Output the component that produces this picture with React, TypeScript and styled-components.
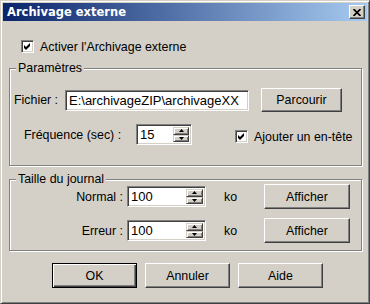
import React from 'react';
import styled, { createGlobalStyle } from 'styled-components';

const GlobalStyle = createGlobalStyle`
  html, body {
    margin: 0;
    padding: 0;
    background: #ffffff;
  }
  body {
    font-family: "Liberation Sans", Arial, sans-serif;
    font-size: 12.4px;
    color: #000;
  }
`;

const Window = styled.div`
  box-sizing: border-box;
  width: 370px;
  height: 304px;
  padding: 2px;
  background: #d4d0c8;
  border: 1px solid;
  border-color: #d4d0c8 #404040 #404040 #d4d0c8;
  box-shadow: inset 1px 1px #ffffff, inset -1px -1px #808080;
  display: flex;
  flex-direction: column;
`;

const TitleBar = styled.div`
  height: 18px;
  padding: 0 2px 0 4px;
  display: flex;
  align-items: center;
  justify-content: space-between;
  background: linear-gradient(to right, #0a246a, #a6caf0);
`;

const Title = styled.span`
  font-family: "DejaVu Sans", Tahoma, sans-serif;
  font-weight: bold;
  font-size: 11.5px;
  color: #ffffff;
`;

const CloseButton = styled.button`
  box-sizing: border-box;
  width: 16px;
  height: 14px;
  padding: 0;
  display: flex;
  align-items: center;
  justify-content: center;
  background: #d4d0c8;
  border: 1px solid;
  border-color: #ffffff #404040 #404040 #ffffff;
  box-shadow: inset -1px -1px #808080;
`;

const Content = styled.div`
  padding: 0 5px 0 6px;
  display: flex;
  flex-direction: column;
`;

const CheckRow = styled.label<{ $offset?: number }>`
  display: flex;
  align-items: center;
  gap: 6px;
  height: 13px;
  margin-top: ${(p) => p.$offset ?? 0}px;
`;

const TopCheck = styled(CheckRow)`
  margin: 19px 0 0 12px;
`;

const Box = styled.span`
  box-sizing: border-box;
  width: 13px;
  height: 13px;
  padding: 1px;
  display: inline-flex;
  align-items: center;
  justify-content: center;
  background: #ffffff;
  border: 1px solid;
  border-color: #808080 #ffffff #ffffff #808080;
  box-shadow: inset 1px 1px #404040, inset -1px -1px #d4d0c8;
`;

const Group = styled.div<{ $top: number; $pad: string }>`
  position: relative;
  margin-top: ${(p) => p.$top}px;
  padding: ${(p) => p.$pad};
  border: 1px solid #808080;
  box-shadow: inset 1px 1px #ffffff, 1px 1px #ffffff;
  display: flex;
  flex-direction: column;
`;

const Legend = styled.span`
  position: absolute;
  top: -8px;
  left: 6px;
  padding: 0 2px;
  line-height: 14px;
  background: #d4d0c8;
`;

const Row = styled.div<{ $gap?: number }>`
  display: flex;
  align-items: center;
  margin-top: ${(p) => p.$gap ?? 0}px;
`;

const Label = styled.span<{ $width: number; $indent?: number; $right?: boolean }>`
  width: ${(p) => p.$width}px;
  margin-left: ${(p) => p.$indent ?? 0}px;
  text-align: ${(p) => (p.$right ? 'right' : 'left')};
  flex-shrink: 0;
`;

const Sunken = styled.div<{ $width: number }>`
  box-sizing: border-box;
  width: ${(p) => p.$width}px;
  height: 21px;
  display: flex;
  background: #ffffff;
  border: 1px solid;
  border-color: #808080 #ffffff #ffffff #808080;
  box-shadow: inset 1px 1px #404040, inset -1px -1px #d4d0c8;
  padding: 2px;
  flex-shrink: 0;
`;

const FieldText = styled.span`
  flex: 1;
  overflow: hidden;
  white-space: nowrap;
  padding-left: 1px;
  font-size: 13px;
  line-height: 15px;
`;

const Spin = styled.div<{ $width: number }>`
  width: ${(p) => p.$width}px;
  display: flex;
  flex-direction: column;
`;

const SpinButton = styled.span`
  box-sizing: border-box;
  flex: 1;
  display: flex;
  align-items: center;
  justify-content: center;
  background: #d4d0c8;
  border: 1px solid;
  border-color: #d4d0c8 #404040 #404040 #d4d0c8;
  box-shadow: inset 1px 1px #ffffff, inset -1px -1px #808080;
`;

const Button = styled.button<{ $width: number; $height?: number; $default?: boolean }>`
  box-sizing: border-box;
  width: ${(p) => p.$width}px;
  height: ${(p) => p.$height ?? 25}px;
  padding: 0;
  flex-shrink: 0;
  font-family: "Liberation Sans", Arial, sans-serif;
  font-size: 12.4px;
  color: #000;
  background: #d4d0c8;
  border: 1px solid;
  border-color: ${(p) => (p.$default ? '#000000' : '#ffffff #404040 #404040 #ffffff')};
  box-shadow: ${(p) =>
    p.$default
      ? 'inset 1px 1px #ffffff, inset -1px -1px #404040, inset -2px -2px #808080'
      : 'inset -1px -1px #808080, inset 1px 1px #d4d0c8'};
`;

const Unit = styled.span`
  width: 40px;
  margin-left: 18px;
  flex-shrink: 0;
`;

const Actions = styled.div`
  display: flex;
  gap: 8px;
  margin: 12px 0 0 43px;
`;

const Check = () => (
  <svg width="9" height="9" viewBox="0 0 9 9">
    <polygon points="1,3 3,5 7,1 7,4 3,8 1,6" fill="#000" />
  </svg>
);

const Arrow = ({ up }: { up?: boolean }) => (
  <svg width="5" height="3" viewBox="0 0 5 3">
    <polygon points={up ? '0,3 5,3 2.5,0' : '0,0 5,0 2.5,3'} fill="#000" />
  </svg>
);

const SpinField = ({ value, width, spin }: { value: string; width: number; spin: number }) => (
  <Sunken $width={width}>
    <FieldText>{value}</FieldText>
    <Spin $width={spin}>
      <SpinButton>
        <Arrow up />
      </SpinButton>
      <SpinButton>
        <Arrow />
      </SpinButton>
    </Spin>
  </Sunken>
);

export default function App() {
  return (
    <>
      <GlobalStyle />
      <Window>
        <TitleBar>
          <Title>Archivage externe</Title>
          <CloseButton>
            <svg width="8" height="7" viewBox="0 0 8 7">
              <path d="M0.5 0 L7.5 7 M7.5 0 L0.5 7" stroke="#000" strokeWidth="1.7" />
            </svg>
          </CloseButton>
        </TitleBar>
        <Content>
          <TopCheck>
            <Box>
              <Check />
            </Box>
            Activer l'Archivage externe
          </TopCheck>

          <Group $top={15} $pad="19px 0 20px 4px">
            <Legend>Paramètres</Legend>
            <Row>
              <Label $width={51}>Fichier :</Label>
              <Sunken $width={184}>
                <FieldText>E:\archivageZIP\archivageXX</FieldText>
              </Sunken>
              <Button $width={81} $height={24} style={{ marginLeft: 12 }}>
                Parcourir
              </Button>
            </Row>
            <Row $gap={12}>
              <Label $width={112} $indent={10}>
                Fréquence (sec) :
              </Label>
              <SpinField value="15" width={56} spin={16} />
              <CheckRow $offset={4} style={{ marginLeft: 43 }}>
                <Box>
                  <Check />
                </Box>
                Ajouter un en-tête
              </CheckRow>
            </Row>
          </Group>

          <Group $top={13} $pad="4px 0 7px 0">
            <Legend>Taille du journal</Legend>
            <Row>
              <Label $width={113} $right style={{ marginRight: 4 }}>
                Normal :
              </Label>
              <SpinField value="100" width={79} spin={17} />
              <Unit>ko</Unit>
              <Button $width={86}>Afficher</Button>
            </Row>
            <Row $gap={9}>
              <Label $width={113} $right style={{ marginRight: 4 }}>
                Erreur :
              </Label>
              <SpinField value="100" width={79} spin={17} />
              <Unit>ko</Unit>
              <Button $width={86}>Afficher</Button>
            </Row>
          </Group>

          <Actions>
            <Button $width={85} $default>
              OK
            </Button>
            <Button $width={85}>Annuler</Button>
            <Button $width={85}>Aide</Button>
          </Actions>
        </Content>
      </Window>
    </>
  );
}
